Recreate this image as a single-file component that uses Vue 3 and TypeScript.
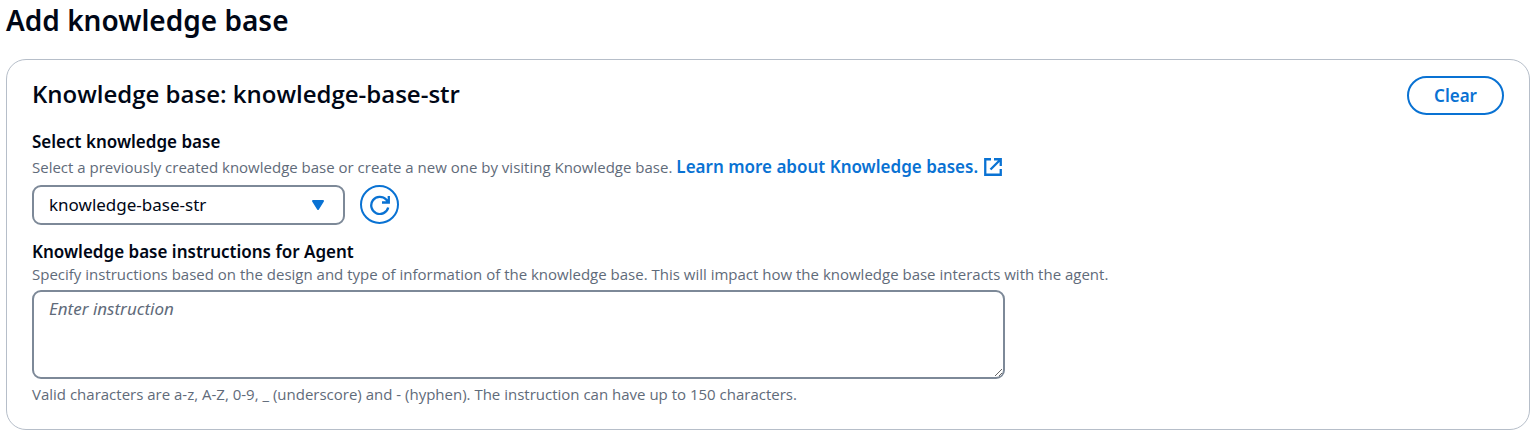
<script setup lang="ts">
import { ref } from 'vue'

const options: string[] = ['knowledge-base-str']
const selected = ref<string>(options[0])
const instruction = ref<string>('')

function clearForm(): void {
  instruction.value = ''
}

function refresh(): void {
  selected.value = options[0]
}
</script>

<template>
  <main class="page">
    <h1 class="page-title">Add knowledge base</h1>

    <section class="panel">
      <header class="panel-header">
        <h2 class="panel-title">Knowledge base: {{ selected }}</h2>
        <button type="button" class="clear-button" @click="clearForm">Clear</button>
      </header>

      <div class="field">
        <label class="label" for="kb-select">Select knowledge base</label>
        <p id="kb-hint" class="hint hint-with-link">
          <span>Select a previously created knowledge base or create a new one by visiting Knowledge base.</span>
          <a class="link" href="#learn-more">
            Learn more about Knowledge bases.
            <svg class="link-icon" viewBox="0 0 18 18" aria-hidden="true">
              <path d="M7 1.25H1.25V16.75H16.75V11M10 1.25H16.75V8M16.5 1.5L6.5 11.5" />
            </svg>
          </a>
        </p>
        <div class="select-row">
          <div class="select-box">
            <select id="kb-select" v-model="selected" class="select" aria-describedby="kb-hint">
              <option v-for="name in options" :key="name" :value="name">{{ name }}</option>
            </select>
            <svg class="caret" viewBox="0 0 14 12" aria-hidden="true">
              <path d="M2 2H12L7 10Z" />
            </svg>
          </div>
          <button type="button" class="refresh-button" aria-label="Refresh" @click="refresh">
            <svg class="refresh-icon" viewBox="0 0 20 20" aria-hidden="true">
              <path d="M18.2 12.4A8.6 8.6 0 1 1 16.2 4.6L18.4 6.8M18.8 1V7.5H12" />
            </svg>
          </button>
        </div>
      </div>

      <div class="field">
        <label class="label" for="kb-instruction">Knowledge base instructions for Agent</label>
        <p id="instruction-hint" class="hint">
          Specify instructions based on the design and type of information of the knowledge base. This will impact how the knowledge base interacts with the agent.
        </p>
        <textarea
          id="kb-instruction"
          v-model="instruction"
          class="textarea"
          placeholder="Enter instruction"
          maxlength="150"
          aria-describedby="instruction-hint instruction-rule"
        ></textarea>
        <p id="instruction-rule" class="hint">
          Valid characters are a-z, A-Z, 0-9, _ (underscore) and - (hyphen). The instruction can have up to 150 characters.
        </p>
      </div>
    </section>
  </main>
</template>

<style>
body {
  background: #ffffff;
}
</style>

<style scoped>
.page {
  padding: 1px 6px 5px;
  font-family: "Noto Sans", "Open Sans", sans-serif;
  color: #000716;
}

.page-title,
.panel-title,
.hint {
  margin: 0;
}

.page-title {
  margin-bottom: 20px;
  font-size: 28px;
  line-height: 38px;
  font-weight: 600;
}

.panel {
  padding: 16px 25px 24px;
  border: 1px solid #b6bec9;
  border-radius: 20px;
}

.panel-header {
  display: flex;
  align-items: flex-start;
  justify-content: space-between;
  margin-bottom: 15px;
}

.panel-title {
  font-family: "Open Sans", sans-serif;
  font-size: 24px;
  line-height: 36px;
  font-weight: 600;
}

.clear-button {
  height: 39px;
  padding: 0 25px;
  border: 2px solid #0972d3;
  border-radius: 20px;
  background: #ffffff;
  color: #0972d3;
  font: 600 17px/24px "Noto Sans", sans-serif;
}

.field {
  display: flex;
  flex-direction: column;
  align-items: flex-start;
}

.field + .field {
  margin-top: 15px;
}

.label {
  font-size: 17px;
  line-height: 23px;
  font-weight: 600;
}

.hint {
  font-family: "Open Sans", sans-serif;
  font-size: 15px;
  line-height: 22px;
  color: #5f6b7a;
}

.hint-with-link {
  display: flex;
  align-items: baseline;
  gap: 4px;
  margin-bottom: 4px;
  line-height: 28px;
}

.link {
  display: inline-flex;
  align-items: center;
  gap: 6px;
  color: #0972d3;
  font-family: "Noto Sans", sans-serif;
  font-size: 17px;
  font-weight: 600;
  text-decoration: none;
}

.link-icon {
  width: 18px;
  height: 18px;
  fill: none;
  stroke: #0972d3;
  stroke-width: 2.3;
}

.select-row {
  display: flex;
  align-items: flex-start;
  gap: 15px;
}

.select-box {
  position: relative;
  width: 313px;
}

.select {
  display: block;
  width: 100%;
  height: 40px;
  padding: 0 40px 0 15px;
  border: 2px solid #7d8998;
  border-radius: 9px;
  appearance: none;
  background: #ffffff;
  color: #000716;
  font: 400 17px/24px "Noto Sans", sans-serif;
}

.caret {
  position: absolute;
  top: 14px;
  right: 20px;
  width: 14px;
  height: 12px;
  fill: #0972d3;
  stroke: #0972d3;
  stroke-width: 2;
  stroke-linejoin: round;
  pointer-events: none;
}

.refresh-button {
  display: flex;
  align-items: center;
  justify-content: center;
  width: 39px;
  height: 39px;
  padding: 0;
  border: 2px solid #0972d3;
  border-radius: 50%;
  background: #ffffff;
}

.refresh-icon {
  width: 20px;
  height: 20px;
  fill: none;
  stroke: #0972d3;
  stroke-width: 2.3;
}

.textarea {
  box-sizing: border-box;
  width: 973px;
  max-width: 100%;
  height: 89px;
  margin: 5px 0 4px;
  padding: 5px 15px;
  border: 2px solid #7d8998;
  border-radius: 9px;
  background: #ffffff;
  color: #000716;
  font: 400 17px/24px "Noto Sans", sans-serif;
}

.textarea::placeholder {
  color: #5f6b7a;
  font-style: italic;
  opacity: 1;
}
</style>
